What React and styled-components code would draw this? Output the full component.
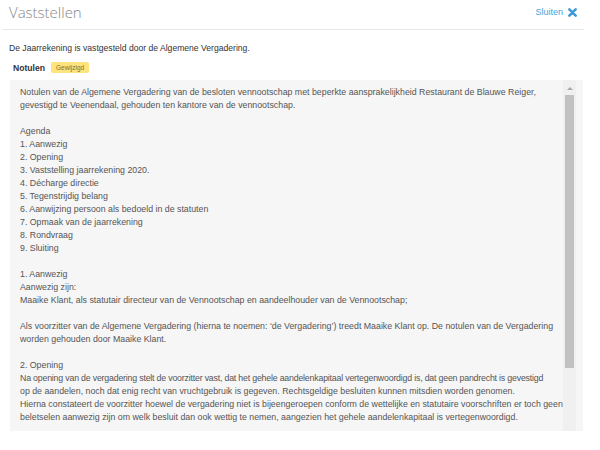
import React from "react";
import styled, { createGlobalStyle } from "styled-components";

const GlobalStyle = createGlobalStyle`
  body {
    margin: 0;
    background: #fff;
    font-family: "Liberation Sans", Arial, sans-serif;
  }
`;

const Modal = styled.div`
  width: 581px;
  margin-left: 3px;
`;

const Header = styled.div`
  display: flex;
  align-items: center;
  justify-content: space-between;
  height: 30px;
  padding: 0 6px;
  border-bottom: 1px solid #e6e6e6;
  box-sizing: border-box;
`;

const Title = styled.h2`
  margin: -5px 0 0 0;
  font-family: "Open Sans", sans-serif;
  font-weight: 300;
  font-size: 15px;
  color: #888;
  line-height: 20px;
`;

const CloseLink = styled.a`
  display: flex;
  align-items: center;
  gap: 5px;
  font-size: 9px;
  color: #45a3dc;
  text-decoration: none;
  cursor: pointer;
  margin: -5px 1px 0 0;
`;

const Body = styled.div`
  padding: 12px 6px 0 6px;
`;

const Intro = styled.p`
  margin: 0 0 7px 0;
  font-size: 8.6px;
  color: #333;
  line-height: 13px;
`;

const LabelRow = styled.div`
  display: flex;
  align-items: center;
  gap: 6px;
  padding-left: 4px;
  margin-bottom: 7px;
`;

const Label = styled.span`
  font-size: 8.6px;
  font-weight: bold;
  color: #333;
`;

const Badge = styled.span`
  display: inline-block;
  background: #fde47c;
  color: #8a6a2a;
  font-size: 6.5px;
  line-height: 11px;
  padding: 0 5px;
  border-radius: 2px;
`;

const NotesBox = styled.div`
  display: flex;
  width: 573px;
  height: 351px;
  margin-left: 1px;
  padding-right: 7px;
  box-sizing: border-box;
  background: #f6f6f6;
`;

const NotesText = styled.div`
  flex: 1;
  min-width: 0;
  overflow: hidden;
  padding: 6px 0 0 10px;
  font-size: 8.8px;
  line-height: 13px;
  color: #555;
`;

const Line = styled.div`
  height: 13px;
  white-space: nowrap;
  letter-spacing: ${(p) => (p.$tight ? "-0.2px" : "normal")};
`;

const ScrollTrack = styled.div`
  display: flex;
  flex-direction: column;
  align-items: center;
  width: 13px;
  background: #f0f0f0;
`;

const ScrollArrow = styled.div`
  width: 0;
  height: 0;
  margin: 7px 0 5px;
  border-left: 3px solid transparent;
  border-right: 3px solid transparent;
  border-bottom: 3px solid #a8a8a8;
`;

const ScrollThumb = styled.div`
  width: 9px;
  height: 273px;
  background: #c1c1c1;
`;

const lines = [
  "Notulen van de Algemene Vergadering van de besloten vennootschap met beperkte aansprakelijkheid Restaurant de Blauwe Reiger,",
  "gevestigd te Veenendaal, gehouden ten kantore van de vennootschap.",
  "",
  "Agenda",
  "1. Aanwezig",
  "2. Opening",
  "3. Vaststelling jaarrekening 2020.",
  "4. Décharge directie",
  "5. Tegenstrijdig belang",
  "6. Aanwijzing persoon als bedoeld in de statuten",
  "7. Opmaak van de jaarrekening",
  "8. Rondvraag",
  "9. Sluiting",
  "",
  "1. Aanwezig",
  "Aanwezig zijn:",
  "Maaike Klant, als statutair directeur van de Vennootschap en aandeelhouder van de Vennootschap;",
  "",
  "Als voorzitter van de Algemene Vergadering (hierna te noemen: ‘de Vergadering’) treedt Maaike Klant op. De notulen van de Vergadering",
  "worden gehouden door Maaike Klant.",
  "",
  "2. Opening",
  {
    text: "Na opening van de vergadering stelt de voorzitter vast, dat het gehele aandelenkapitaal vertegenwoordigd is, dat geen pandrecht is gevestigd",
    tight: true,
  },
  "op de aandelen, noch dat enig recht van vruchtgebruik is gegeven. Rechtsgeldige besluiten kunnen mitsdien worden genomen.",
  "Hierna constateert de voorzitter hoewel de vergadering niet is bijeengeroepen conform de wettelijke en statutaire voorschriften er toch geen",
  "beletselen aanwezig zijn om welk besluit dan ook wettig te nemen, aangezien het gehele aandelenkapitaal is vertegenwoordigd.",
];

const CloseIcon = () => (
  <svg width="9" height="9" viewBox="0 0 10 10">
    <path d="M1.5 1.5 L8.5 8.5 M8.5 1.5 L1.5 8.5" stroke="#3b99d8" strokeWidth="2.8" strokeLinecap="round" />
  </svg>
);

export default function App() {
  return (
    <>
      <GlobalStyle />
      <Modal>
        <Header>
          <Title>Vaststellen</Title>
          <CloseLink>
            Sluiten <CloseIcon />
          </CloseLink>
        </Header>
        <Body>
          <Intro>De Jaarrekening is vastgesteld door de Algemene Vergadering.</Intro>
          <LabelRow>
            <Label>Notulen</Label>
            <Badge>Gewijzigd</Badge>
          </LabelRow>
          <NotesBox>
            <NotesText>
              {lines.map((l, i) =>
                typeof l === "string" ? (
                  <Line key={i}>{l}</Line>
                ) : (
                  <Line key={i} $tight={l.tight}>
                    {l.text}
                  </Line>
                )
              )}
            </NotesText>
            <ScrollTrack>
              <ScrollArrow />
              <ScrollThumb />
            </ScrollTrack>
          </NotesBox>
        </Body>
      </Modal>
    </>
  );
}
